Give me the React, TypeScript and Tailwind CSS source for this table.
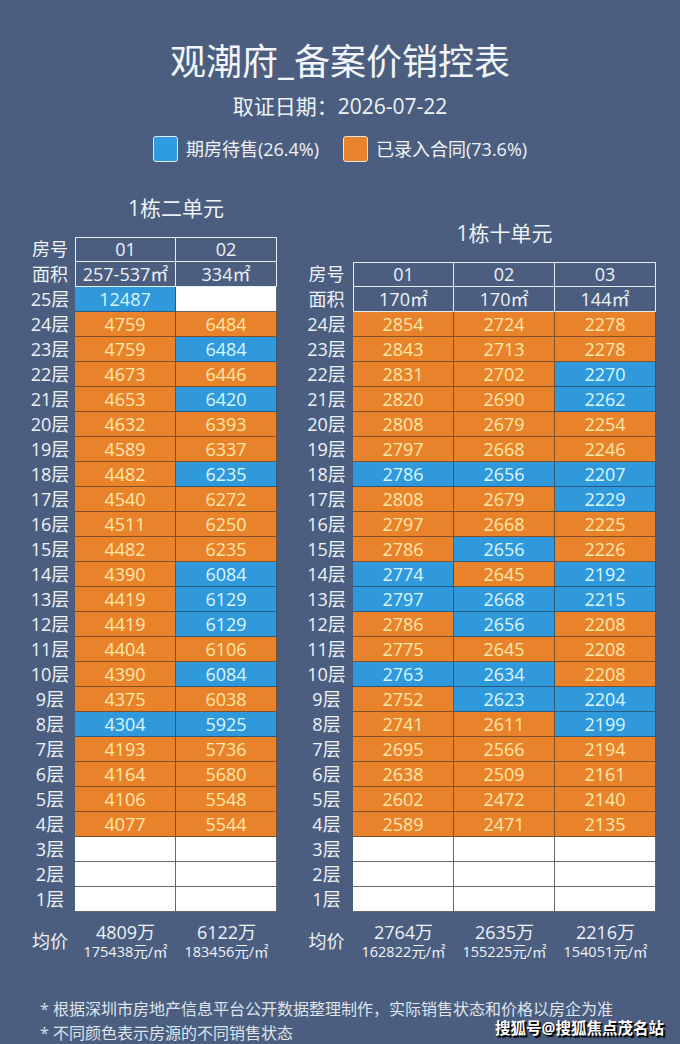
import React from 'react';

type Cell = [string, 'O' | 'B' | 'W'];

const leftRows: { floor: string; cells: Cell[] }[] = [
  { floor: '25层', cells: [['12487', 'B'], ['', 'W']] },
  { floor: '24层', cells: [['4759', 'O'], ['6484', 'O']] },
  { floor: '23层', cells: [['4759', 'O'], ['6484', 'B']] },
  { floor: '22层', cells: [['4673', 'O'], ['6446', 'O']] },
  { floor: '21层', cells: [['4653', 'O'], ['6420', 'B']] },
  { floor: '20层', cells: [['4632', 'O'], ['6393', 'O']] },
  { floor: '19层', cells: [['4589', 'O'], ['6337', 'O']] },
  { floor: '18层', cells: [['4482', 'O'], ['6235', 'B']] },
  { floor: '17层', cells: [['4540', 'O'], ['6272', 'O']] },
  { floor: '16层', cells: [['4511', 'O'], ['6250', 'O']] },
  { floor: '15层', cells: [['4482', 'O'], ['6235', 'O']] },
  { floor: '14层', cells: [['4390', 'O'], ['6084', 'B']] },
  { floor: '13层', cells: [['4419', 'O'], ['6129', 'B']] },
  { floor: '12层', cells: [['4419', 'O'], ['6129', 'B']] },
  { floor: '11层', cells: [['4404', 'O'], ['6106', 'O']] },
  { floor: '10层', cells: [['4390', 'O'], ['6084', 'B']] },
  { floor: '9层', cells: [['4375', 'O'], ['6038', 'O']] },
  { floor: '8层', cells: [['4304', 'B'], ['5925', 'B']] },
  { floor: '7层', cells: [['4193', 'O'], ['5736', 'O']] },
  { floor: '6层', cells: [['4164', 'O'], ['5680', 'O']] },
  { floor: '5层', cells: [['4106', 'O'], ['5548', 'O']] },
  { floor: '4层', cells: [['4077', 'O'], ['5544', 'O']] },
  { floor: '3层', cells: [['', 'W'], ['', 'W']] },
  { floor: '2层', cells: [['', 'W'], ['', 'W']] },
  { floor: '1层', cells: [['', 'W'], ['', 'W']] },
];

const rightRows: { floor: string; cells: Cell[] }[] = [
  { floor: '24层', cells: [['2854', 'O'], ['2724', 'O'], ['2278', 'O']] },
  { floor: '23层', cells: [['2843', 'O'], ['2713', 'O'], ['2278', 'O']] },
  { floor: '22层', cells: [['2831', 'O'], ['2702', 'O'], ['2270', 'B']] },
  { floor: '21层', cells: [['2820', 'O'], ['2690', 'O'], ['2262', 'B']] },
  { floor: '20层', cells: [['2808', 'O'], ['2679', 'O'], ['2254', 'O']] },
  { floor: '19层', cells: [['2797', 'O'], ['2668', 'O'], ['2246', 'O']] },
  { floor: '18层', cells: [['2786', 'B'], ['2656', 'B'], ['2207', 'B']] },
  { floor: '17层', cells: [['2808', 'O'], ['2679', 'O'], ['2229', 'B']] },
  { floor: '16层', cells: [['2797', 'O'], ['2668', 'O'], ['2225', 'O']] },
  { floor: '15层', cells: [['2786', 'O'], ['2656', 'B'], ['2226', 'O']] },
  { floor: '14层', cells: [['2774', 'B'], ['2645', 'O'], ['2192', 'B']] },
  { floor: '13层', cells: [['2797', 'B'], ['2668', 'B'], ['2215', 'B']] },
  { floor: '12层', cells: [['2786', 'O'], ['2656', 'B'], ['2208', 'O']] },
  { floor: '11层', cells: [['2775', 'O'], ['2645', 'O'], ['2208', 'O']] },
  { floor: '10层', cells: [['2763', 'B'], ['2634', 'B'], ['2208', 'O']] },
  { floor: '9层', cells: [['2752', 'O'], ['2623', 'B'], ['2204', 'B']] },
  { floor: '8层', cells: [['2741', 'O'], ['2611', 'O'], ['2199', 'B']] },
  { floor: '7层', cells: [['2695', 'O'], ['2566', 'O'], ['2194', 'O']] },
  { floor: '6层', cells: [['2638', 'O'], ['2509', 'O'], ['2161', 'O']] },
  { floor: '5层', cells: [['2602', 'O'], ['2472', 'O'], ['2140', 'O']] },
  { floor: '4层', cells: [['2589', 'O'], ['2471', 'O'], ['2135', 'O']] },
  { floor: '3层', cells: [['', 'W'], ['', 'W'], ['', 'W']] },
  { floor: '2层', cells: [['', 'W'], ['', 'W'], ['', 'W']] },
  { floor: '1层', cells: [['', 'W'], ['', 'W'], ['', 'W']] },
];

const cellStyle = {
  O: 'bg-[#e8832b] text-[#fde7a9] border-[#80502a]',
  B: 'bg-[#2f99db] text-[#d9f7ff] border-[#2a5a80]',
  W: 'bg-white text-transparent border-[#666666]',
};

const Block = ({
  title,
  labelW,
  rooms,
  areas,
  rows,
  avgs,
  offset,
}: {
  title: string;
  labelW: string;
  rooms: string[];
  areas: string[];
  rows: { floor: string; cells: Cell[] }[];
  avgs: [string, string][];
  offset: boolean;
}) => (
  <div className={offset ? 'pt-[25px]' : ''}>
    <div className="flex">
      <div className={labelW} />
      <div className="flex-1 text-center text-[21px] leading-[24px] mb-[17px]">{title}</div>
    </div>
    {/* header rows */}
    <div className="flex">
      <div className={`${labelW} h-[25px] flex items-center justify-center text-[18px]`}>房号</div>
      {rooms.map((r, i) => (
        <div
          key={r}
          className={`w-[101px] h-[25px] border-t border-b border-r border-[#e6ecf3] flex items-center justify-center text-[18px] ${i === 0 ? 'border-l' : ''}`}
        >
          {r}
        </div>
      ))}
    </div>
    <div className="flex">
      <div className={`${labelW} h-[25px] flex items-center justify-center text-[18px]`}>面积</div>
      {areas.map((a, i) => (
        <div
          key={i}
          className={`w-[101px] h-[25px] border-b border-r border-[#e6ecf3] flex items-center justify-center text-[18px] ${i === 0 ? 'border-l' : ''}`}
        >
          {a}
        </div>
      ))}
    </div>
    {rows.map(row => (
      <div key={row.floor} className="flex">
        <div className={`${labelW} h-[25px] flex items-center justify-center text-[18px]`}>{row.floor}</div>
        {row.cells.map(([v, c], i) => (
          <div
            key={i}
            className={`w-[101px] h-[25px] border-b border-r flex items-center justify-center text-[18px] ${cellStyle[c]}`}
          >
            {v}
          </div>
        ))}
      </div>
    ))}
    {/* averages */}
    <div className="flex mt-[10px]">
      <div className={`${labelW} h-[38px] flex items-center justify-center text-[18px]`}>均价</div>
      {avgs.map(([total, unit]) => (
        <div key={unit} className="w-[101px] flex flex-col items-center">
          <div className="text-[18px] leading-[21px]">{total}</div>
          <div className="mt-[1px] text-[14.5px] leading-[16px] whitespace-nowrap">{unit}</div>
        </div>
      ))}
    </div>
  </div>
);

export default function App() {
  return (
    <div className="relative w-[680px] h-[1044px] overflow-hidden bg-[#4b5e7f] text-[#eef2f7] font-['Open_Sans','Noto_Sans_CJK_SC',sans-serif]">
      <div className="flex flex-col items-center pt-[40px]">
        <h1 className="text-[36px] leading-[44px] text-[#f2f5f9]">观潮府_备案价销控表</h1>
        <div className="mt-[8px] text-[21px] leading-[28px]">取证日期：2026-07-22</div>
        <div className="mt-[16px] flex items-center h-[26px] text-[18px]">
          <span className="w-[25px] h-[26px] rounded-[3px] bg-[#2f9be0] border border-[#dfe9f2]" />
          <span className="ml-[8px]">期房待售(26.4%)</span>
          <span className="ml-[24px] w-[25px] h-[26px] rounded-[3px] bg-[#e8832b] border border-[#f1e3d6]" />
          <span className="ml-[8px]">已录入合同(73.6%)</span>
        </div>
      </div>

      <div className="flex mt-[34px] pl-[25px] gap-[23px]">
        <Block
          title="1栋二单元"
          labelW="w-[50px]"
          rooms={['01', '02']}
          areas={['257-537㎡', '334㎡']}
          rows={leftRows}
          avgs={[
            ['4809万', '175438元/㎡'],
            ['6122万', '183456元/㎡'],
          ]}
          offset={false}
        />
        <Block
          title="1栋十单元"
          labelW="w-[53px]"
          rooms={['01', '02', '03']}
          areas={['170㎡', '170㎡', '144㎡']}
          rows={rightRows}
          avgs={[
            ['2764万', '162822元/㎡'],
            ['2635万', '155225元/㎡'],
            ['2216万', '154051元/㎡'],
          ]}
          offset={true}
        />
      </div>

      <div className="mt-[37px] pl-[40px] text-[16px] leading-[24px] text-[#dde4ee]">
        <div>* 根据深圳市房地产信息平台公开数据整理制作，实际销售状态和价格以房企为准</div>
        <div>* 不同颜色表示房源的不同销售状态</div>
      </div>

      <div className="absolute left-[495px] top-[1016px] text-[15.5px] leading-[24px] font-bold text-white [text-shadow:1px_1px_0_#000,2px_2px_1px_#000]">
        搜狐号@搜狐焦点茂名站
      </div>
    </div>
  );
}
